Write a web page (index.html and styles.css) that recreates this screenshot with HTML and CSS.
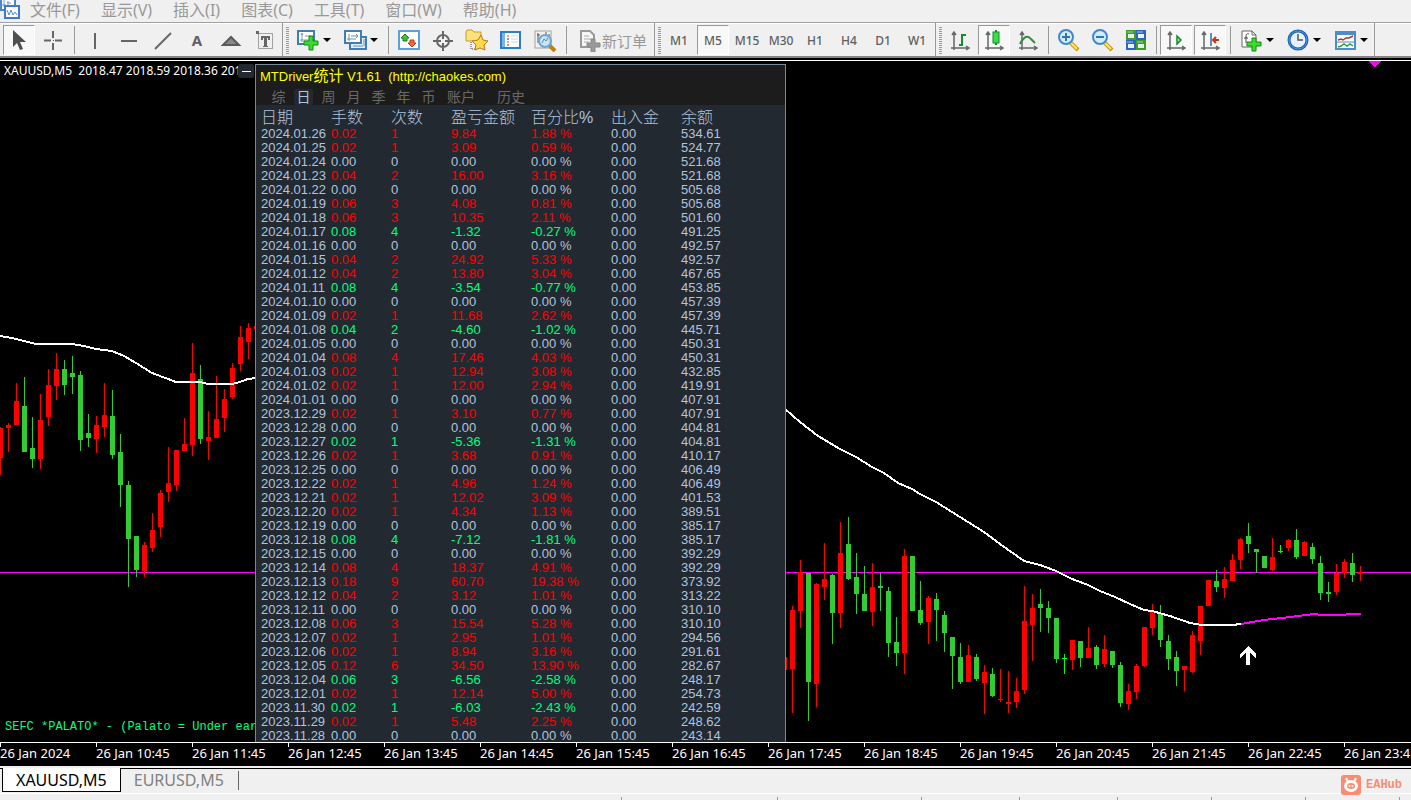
FILE: index.html
```html
<!DOCTYPE html>
<html lang="zh-CN">
<head>
    <meta charset="UTF-8">
    <meta name="viewport" content="width=device-width, initial-scale=1.0">
    <title>XAUUSD,M5</title>
    <link rel="stylesheet" href="styles.css">
</head>
<body>
    <nav class="menu">
        <svg class="menu-icon" width="20" height="20" viewBox="0 0 20 20">
            <path d="M1 0v10h14V0" fill="#fff" stroke="#4a86cc" stroke-width="2"/>
            <path d="M4 0v7M2 5h4M8 1v6M7 3h4" stroke="#6f9bd0" fill="none"/>
            <rect x="5" y="6" width="14" height="12" fill="#fff" stroke="#3c79d0" stroke-width="2"/>
            <path d="M7 10l2 5 2-5 2 5 2-3 2 3" fill="none" stroke="#5e86c4"/>
        </svg>
        <button>文件(F)</button>
        <button>显示(V)</button>
        <button>插入(I)</button>
        <button>图表(C)</button>
        <button>工具(T)</button>
        <button>窗口(W)</button>
        <button>帮助(H)</button>
    </nav>

    <div class="toolbar">
        <!-- Line studies -->
        <div class="group">
            <button class="tool on" aria-label="Cursor"><svg viewBox="0 0 24 24"><path d="M6 2v17l4-4 3 7 3-1-3-7h6z" fill="#4f4f4f"/></svg></button>
            <button class="tool" aria-label="Crosshair"><svg viewBox="0 0 24 24"><path d="M12 3v7M12 15v7M3 12.500h7M14 12.500h7" stroke="#666" stroke-width="2"/><path d="M12 12h1v1h-1z" fill="#555"/></svg></button>
            <span class="sep"></span>
            <button class="tool" aria-label="Vertical line"><svg viewBox="0 0 24 24"><path d="M12 5v16" stroke="#666" stroke-width="2"/></svg></button>
            <button class="tool" aria-label="Horizontal line"><svg viewBox="0 0 24 24"><path d="M4 13h16" stroke="#666" stroke-width="2"/></svg></button>
            <button class="tool" aria-label="Trendline"><svg viewBox="0 0 24 24"><path d="M4 21L20 5" stroke="#666" stroke-width="2"/></svg></button>
            <button class="tool letter">A</button>
            <button class="tool" aria-label="Shapes"><svg viewBox="0 0 24 24"><path d="M4 17l8-8 8 8z" fill="#888" stroke="#5a5a5a" stroke-width="2"/></svg></button>
            <button class="tool" aria-label="Text label"><svg viewBox="0 0 24 24"><path d="M5.500 5.500h14v15h-14z" fill="none" stroke="#555" stroke-dasharray="1 1"/><path d="M3 3h3v3H3zM8 8h9v4h-2v-2h-1v8h1v1h-5v-1h1v-8h-1v2H8z" fill="#666"/></svg></button>
        </div>

        <!-- Standard -->
        <div class="group">
            <span class="grip"></span>
            <button class="tool drop" aria-label="New chart"><svg viewBox="0 0 24 24"><rect x="1" y="3" width="16" height="13" fill="#fff" stroke="#3f7db5" stroke-width="2"/><path d="M5 6v8M3 12h9M4 7l1-2 1 2M8 8h6" stroke="#7799b5" fill="none"/><path d="M12 8h4v5h5v4h-5v5h-4v-5H7v-4h5z" fill="#3bdc2c" stroke="#138b13"/></svg><i class="caret"></i></button>
            <button class="tool drop" aria-label="Profiles"><svg viewBox="0 0 24 24"><rect x="6" y="9" width="16" height="12" fill="#e4effa" stroke="#3f7db5" stroke-width="2"/><rect x="1" y="3" width="16" height="12" fill="#fff" stroke="#3f7db5" stroke-width="2"/><path d="M5 6v7M3 11h9M7 8h7M12 6l2 2-2 2M9 18h10M20 11v7" stroke="#6690b8" fill="none"/></svg><i class="caret"></i></button>
            <span class="sep"></span>
            <button class="tool" aria-label="Market watch"><svg viewBox="0 0 24 24"><rect x="2" y="3" width="20" height="18" fill="#fff" stroke="#5aa0dc" stroke-width="2"/><path d="M8 6l4 4h-2v3H6v-3H4z" fill="#3cc43c" stroke="#187818"/><path d="M15 19l4-4h-2v-3h-4v3h-2z" fill="#f4693a" stroke="#b73a16"/></svg></button>
            <button class="tool" aria-label="Data window"><svg viewBox="0 0 24 24"><circle cx="12" cy="13" r="6" fill="none" stroke="#666" stroke-width="2"/><path d="M12 3v8M12 15v8M2 13h8M14 13h8" stroke="#666" stroke-width="2"/></svg></button>
            <button class="tool" aria-label="Navigator"><svg viewBox="0 0 24 24"><path d="M1 4l1-2h5l2 2h7v9H1z" fill="#fbe27a" stroke="#c79b24"/><path d="M6 14v7h5" stroke="#444" stroke-dasharray="1 1" fill="none"/><path d="M16 7l2 5 5 1-4 4 1 5-5-2-5 2 1-5-4-4 6-1z" fill="#ffd84b" stroke="#b37b16"/></svg></button>
            <button class="tool" aria-label="Terminal"><svg viewBox="0 0 24 24"><rect x="2" y="4" width="19" height="16" fill="#fff" stroke="#2e7cc9" stroke-width="2"/><path d="M3 5h3v14H3z" fill="#79b4e8"/><path d="M8 8h2M8 14h2" stroke="#e33" stroke-width="1"/><path d="M8 11h2M8 17h2" stroke="#333" stroke-width="1"/><path d="M12 8h7M12 11h7M12 14h7" stroke="#c7d6e6"/></svg></button>
            <button class="tool" aria-label="Strategy tester"><svg viewBox="0 0 24 24"><rect x="2" y="3" width="16" height="17" fill="#f4f2ec" stroke="#aaa08e"/><path d="M5 5v10M13 4v8M16 6v9M4 7h3M12 9h3" stroke="#555"/><path d="M16 17l6 6" stroke="#b8860b" stroke-width="4"/><circle cx="12" cy="13" r="6" fill="#c3e2f8" fill-opacity=".9" stroke="#6aa7d6" stroke-width="2"/><path d="M9 15l2-4 2 2 2-3" stroke="#789" fill="none"/></svg></button>
            <span class="sep"></span>
            <button class="tool order"><svg viewBox="0 0 24 24"><path d="M3 3h9l4 4v12H3z" fill="#f6f6f6" stroke="#999" stroke-width="2"/><path d="M6 8h5M6 11h7M6 14h5" stroke="#aaa"/><path d="M13 11h4v4h5v4h-5v5h-4v-5H9v-4h4z" fill="#999" stroke="#888"/></svg>新订单</button>
        </div>

        <!-- Periodicity -->
        <div class="group periods">
            <span class="grip"></span>
            <button class="tool">M1</button>
            <button class="tool on">M5</button>
            <button class="tool">M15</button>
            <button class="tool">M30</button>
            <button class="tool">H1</button>
            <button class="tool">H4</button>
            <button class="tool">D1</button>
            <button class="tool">W1</button>
        </div>

        <!-- Charts -->
        <div class="group charts">
            <span class="grip"></span>
            <button class="tool" aria-label="Bar chart"><svg viewBox="0 0 24 24"><path class="axis" d="M6 5v17M3 20h17M4 7l2-3 2 3M18 18l3 2-3 2"/><path d="M14 6v12M11 17h3M14 7h4" stroke="#168a2c" stroke-width="2" fill="none"/></svg></button>
            <button class="tool on" aria-label="Candlesticks"><svg viewBox="0 0 24 24"><path class="axis" d="M6 5v17M3 20h17M4 7l2-3 2 3M18 18l3 2-3 2"/><path d="M14 2v15" stroke="#168a2c" stroke-width="2"/><rect x="11" y="4" width="6" height="11" fill="#3bdc4b" stroke="#168a2c"/></svg></button>
            <button class="tool" aria-label="Line chart"><svg viewBox="0 0 24 24"><path class="axis" d="M6 5v17M3 20h17M4 7l2-3 2 3M18 18l3 2-3 2"/><path d="M4 16c4-8 8-9 11-5l4 4" stroke="#2f8f3f" stroke-width="2" fill="none"/></svg></button>
            <span class="sep"></span>
            <button class="tool" aria-label="Zoom in"><svg viewBox="0 0 24 24"><path d="M15 15l7 7" stroke="#c49a16" stroke-width="4"/><path d="M15 15l6 6" stroke="#ffe36b" stroke-width="2"/><circle cx="10" cy="9" r="7" fill="#d3ecfb" stroke="#3f88cc" stroke-width="2"/><path d="M6 9h8M10 5v8" stroke="#3178a8" stroke-width="2"/></svg></button>
            <button class="tool" aria-label="Zoom out"><svg viewBox="0 0 24 24"><path d="M15 15l7 7" stroke="#c49a16" stroke-width="4"/><path d="M15 15l6 6" stroke="#ffe36b" stroke-width="2"/><circle cx="10" cy="9" r="7" fill="#d3ecfb" stroke="#3f88cc" stroke-width="2"/><path d="M6 9h8" stroke="#3178a8" stroke-width="2"/></svg></button>
            <button class="tool" aria-label="Tile windows"><svg viewBox="0 0 24 24"><path d="M2 2h10v10H2zM12 12h10v10H12z" fill="#3f9e1c"/><path d="M12 2h10v10H12zM2 12h10v10H2z" fill="#2d63c8"/><path d="M4 6h6v4H4zM14 6h6v4h-6zM4 16h6v4H4zM14 16h6v4h-6z" fill="#e8f2ee"/><path d="M3 4h6M13 4h6M3 14h6M13 14h6" stroke="#a9c7e0"/></svg></button>
            <span class="sep"></span>
            <button class="tool on" aria-label="Auto scroll"><svg viewBox="0 0 24 24"><path class="axis" d="M6 5v17M3 20h17M4 7l2-3 2 3M18 18l3 2-3 2"/><path d="M13 8v8l4-4z" fill="#8cf096" stroke="#168a2c" stroke-width="1.500"/></svg></button>
            <button class="tool on" aria-label="Chart shift"><svg viewBox="0 0 24 24"><path class="axis" d="M6 5v17M3 20h17M4 7l2-3 2 3M18 18l3 2-3 2"/><path d="M13 5v13" stroke="#2d6fa8" stroke-width="1.500"/><path d="M21 12h-5M18 9l-3 3 3 3" stroke="#c03a10" stroke-width="2" fill="none"/></svg></button>
            <span class="sep"></span>
            <button class="tool drop" aria-label="Indicators"><svg viewBox="0 0 24 24"><path d="M2 3h10l4 4v12H2z" fill="#fff" stroke="#666"/><path d="M12 3v4h4" fill="none" stroke="#666"/><path d="M9 6c-2-1-3 0-3 3v6M4 10h4" stroke="#444" fill="none"/><path d="M12 10h4v4h5v4h-5v5h-4v-5H7v-4h5z" fill="#3bdc2c" stroke="#138b13"/></svg><i class="caret"></i></button>
            <button class="tool drop" aria-label="Periods"><svg viewBox="0 0 24 24"><circle cx="11" cy="12" r="9" fill="#e6f1fb" stroke="#1c5fae" stroke-width="3"/><circle cx="11" cy="12" r="9" fill="none" stroke="#4d9ae0"/><path d="M11 6v6h5" stroke="#555" fill="none" stroke-width="1.500"/></svg><i class="caret"></i></button>
            <button class="tool drop" aria-label="Templates"><svg viewBox="0 0 24 24"><rect x="2" y="4" width="19" height="17" fill="#fff" stroke="#4a8dca" stroke-width="2"/><path d="M1 3h21v4H1z" fill="#4a8dca"/><path d="M2 14h19" stroke="#4a8dca"/><path d="M4 12l3-1 2 1 3-2 3 0 4-2" stroke="#b2361b" fill="none" stroke-width="1.500"/><path d="M4 19l3-1 3-2 3 2 3-2 3 2" stroke="#2f9a3f" fill="none" stroke-width="1.500"/></svg><i class="caret"></i></button>
        </div>
    </div>

    <main class="chart">
        <svg class="plot" id="plot"></svg>
        <div class="ohlc">XAUUSD,M5&nbsp; 2018.47 2018.59 2018.36 2018</div>
        <div class="comment">SEFC *PALATO* - (Palato = Under eart</div>
        <button class="minimize" aria-label="Minimize"></button>

        <section class="panel">
            <header>
                <h1>MTDriver<span>统计</span> V1.61&nbsp; (http://chaokes.com)</h1>
                <div class="ranges">
                    <button>综</button>
                    <button class="active">日</button>
                    <button>周</button>
                    <button>月</button>
                    <button>季</button>
                    <button>年</button>
                    <button>币</button>
                    <button class="wide">账户</button>
                    <button class="wide last">历史</button>
                </div>
            </header>
            <table>
                <colgroup>
                    <col class="c-date"><col class="c-lots"><col class="c-lots"><col class="c-profit"><col class="c-profit"><col class="c-flow"><col>
                </colgroup>
                <thead>
                    <tr><th>日期</th><th>手数</th><th>次数</th><th>盈亏金额</th><th>百分比%</th><th>出入金</th><th>余额</th></tr>
                </thead>
                <tbody id="rows"></tbody>
            </table>
        </section>
    </main>

    <ol class="axis-x" id="times"></ol>

    <div class="tabs">
        <button class="tab active">XAUUSD,M5</button>
        <button class="tab">EURUSD,M5</button>
        <div class="brand">
            <svg width="20" height="20" viewBox="0 0 20 20">
                <rect width="20" height="20" rx="3" fill="#fa8c72"/>
                <path d="M5 3l2 4M15 3l-2 4" stroke="#fff" stroke-width="2"/>
                <ellipse cx="10" cy="11" rx="7" ry="6" fill="#fff"/>
                <ellipse cx="10" cy="11" rx="4" ry="3" fill="#fa8c72"/>
                <circle cx="8.500" cy="11" r="1" fill="#fff"/><circle cx="11.500" cy="11" r="1" fill="#fff"/>
            </svg>
            EAHub
        </div>
    </div>

    <footer class="status">
        <span class="fill"></span><span class="server"></span><span class="profile"></span><span class="bar"></span><span class="bar"></span><span></span><span></span><span></span>
    </footer>

    <script src="script.js"></script>
</body>
</html>
```
FILE: styles.css
```css
* { margin: 0; padding: 0; box-sizing: border-box; }
body {
    display: flex;
    flex-direction: column;
    height: 100vh;
    overflow: hidden;
    background: #f0f0f0;
    font-family: "Noto Sans", "Noto Sans CJK SC", sans-serif;
}
button {
    border: none;
    background: none;
    font: inherit;
    color: inherit;
    white-space: nowrap;
}

/* Menu */
.menu {
    display: flex;
    align-items: flex-start;
    gap: 21px;
    height: 22px;
    color: #999;
    font-size: 16px;
    line-height: 20px;
}
.menu-icon { margin-right: -11px; }

/* Toolbar */
.toolbar {
    display: flex;
    height: 36px;
    border-top: 1px solid #a0a0a0;
    border-bottom: 2px solid #858585;
    box-shadow: inset 0 1px #fff;
}
.group {
    display: flex;
    align-items: center;
    gap: 2px;
    padding: 1px 1px 0 3px;
    border-right: 1px solid #999;
}
.tool {
    display: flex;
    align-items: center;
    justify-content: center;
    flex: none;
    width: 32px;
    height: 30px;
    color: #606060;
}
.tool svg { width: 24px; height: 24px; flex: none; }
.tool.on {
    border: 1px solid;
    border-color: #999 #fff #fff #999;
    background: #f8f8f8;
}
.tool.drop { width: 45px; gap: 2px; }
.tool.letter { font: bold 15px "Noto Sans", sans-serif; }
.tool.order {
    width: auto;
    padding: 0 6px 0 7px;
    color: #999;
    font-size: 15px;
}
.caret {
    border: 4px solid transparent;
    border-top-color: #000;
    border-bottom-width: 0;
}
.sep { width: 6px; height: 28px; display: flex; justify-content: center; }
.sep::before { content: ""; width: 1px; background: #999; }
.charts .sep { width: 4px; }
.grip {
    width: 3px;
    height: 27px;
    background: repeating-linear-gradient(#999 0 1px, #f0f0f0 1px 2px);
}
.periods { padding-right: 2px; font-size: 12px; font-weight: 500; }
.axis { fill: none; stroke: #666; stroke-width: 1.5; }

/* Chart */
.chart {
    position: relative;
    flex: 1;
    min-height: 0;
    overflow: hidden;
    background: #000;
    border-top: 2px solid #000;
    box-shadow: inset 0 1px #fff;
    color: #fff;
}
.plot { display: block; width: 100%; height: 100%; shape-rendering: crispEdges; }
.ohlc {
    position: absolute;
    top: 2px;
    left: 4px;
    font-size: 12px;
    line-height: 18px;
}
.comment {
    position: absolute;
    left: 5px;
    bottom: 7px;
    color: #00ff7f;
    font: 12px/16px "Liberation Mono", monospace;
}
.minimize {
    position: absolute;
    top: 4px;
    left: 238px;
    width: 16px;
    height: 14px;
    border-radius: 2px;
    background: #232930;
}
.minimize::before {
    content: "";
    display: block;
    width: 9px;
    margin: 0 auto;
    border-top: 1px solid #fff;
}

/* Statistics window */
.panel {
    position: absolute;
    top: 4px;
    left: 255px;
    width: 531px;
    border: 1px solid #778899;
    border-bottom: none;
    background: #232930;
    font-family: "Liberation Sans", "Noto Sans CJK SC", sans-serif;
    font-size: 13px;
    color: #b0c4de;
}
.panel header { height: 40px; background: #1c1c1c; }
.panel h1 {
    height: 24px;
    padding-left: 4px;
    color: #ff0;
    font-size: 13px;
    font-weight: normal;
    line-height: 22px;
}
.panel h1 span { font-size: 15px; }
.ranges { display: flex; gap: 6px; padding-left: 13px; color: #696969; }
.ranges button { width: 19px; height: 16px; font-size: 14px; line-height: 16px; }
.ranges .active { background: #232930; border-radius: 2px; color: #b0c4de; }
.ranges .wide { width: 34px; }
.ranges .last { margin-left: 10px; }
.panel table { width: 100%; table-layout: fixed; border-collapse: collapse; }
.panel th { height: 22px; padding-top: 4px; font-size: 16px; font-weight: 300; line-height: 18px; }
.panel td { height: 14px; line-height: 14px; }
.panel th, .panel td { text-align: left; white-space: nowrap; }
.panel th:first-child, .panel td:first-child { padding-left: 5px; }
.c-date { width: 75px; }
.c-lots { width: 60px; }
.c-profit { width: 80px; }
.c-flow { width: 70px; }
.win .v { color: #f00; }
.loss .v { color: #00ff7f; }

/* Time axis */
.axis-x {
    display: flex;
    flex: none;
    height: 24px;
    overflow: hidden;
    list-style: none;
    background: #000;
    border-top: 1px solid #fff;
    color: #fff;
    font-size: 13px;
    line-height: 20px;
}
.axis-x li { flex: 0 0 96px; white-space: nowrap; }
.axis-x li::before {
    content: "";
    float: left;
    width: 1px;
    height: 4px;
    margin-right: -1px;
    background: #fff;
}

/* Chart tabs */
.tabs {
    position: relative;
    display: flex;
    flex: none;
    height: 28px;
    padding: 2px 0 0 2px;
    background: linear-gradient(#f0f0f0 2px, #000 2px 3px, #f0f0f0 3px);
    border-bottom: 1px solid #fff;
    font-size: 16px;
}
.tab {
    display: flex;
    align-items: center;
    height: 24px;
    padding: 0 13px;
    color: #808080;
    line-height: 20px;
}
.tab::after { content: ""; width: 1px; height: 19px; margin-left: 14px; margin-right: -14px; background: #666; }
.tab.active { background: #fff; border: 1px solid #000; border-top: none; color: #000; }
.tab.active::after { display: none; }
.brand {
    position: absolute;
    top: 9px;
    right: 9px;
    display: flex;
    align-items: center;
    gap: 5px;
    color: #fa8c72;
    font: bold 12px "Liberation Mono", monospace;
}
.status {
    display: flex;
    flex: none;
    height: 6px;
    padding: 3px 11px 0 0;
}
.status span { width: 94px; border-right: 1px solid #999; }
.status .fill { flex: 1; }
.status .server { width: 156px; }
.status .profile { width: 144px; }
.status .bar { width: 98px; }
```
FILE: script.js
```javascript
// date, lots, trades, profit, percent, balance
const days = [
    ["2024.01.26", "0.02", 1, "9.84", "1.88", "534.61"],
    ["2024.01.25", "0.02", 1, "3.09", "0.59", "524.77"],
    ["2024.01.24", "0.00", 0, "0.00", "0.00", "521.68"],
    ["2024.01.23", "0.04", 2, "16.00", "3.16", "521.68"],
    ["2024.01.22", "0.00", 0, "0.00", "0.00", "505.68"],
    ["2024.01.19", "0.06", 3, "4.08", "0.81", "505.68"],
    ["2024.01.18", "0.06", 3, "10.35", "2.11", "501.60"],
    ["2024.01.17", "0.08", 4, "-1.32", "-0.27", "491.25"],
    ["2024.01.16", "0.00", 0, "0.00", "0.00", "492.57"],
    ["2024.01.15", "0.04", 2, "24.92", "5.33", "492.57"],
    ["2024.01.12", "0.04", 2, "13.80", "3.04", "467.65"],
    ["2024.01.11", "0.08", 4, "-3.54", "-0.77", "453.85"],
    ["2024.01.10", "0.00", 0, "0.00", "0.00", "457.39"],
    ["2024.01.09", "0.02", 1, "11.68", "2.62", "457.39"],
    ["2024.01.08", "0.04", 2, "-4.60", "-1.02", "445.71"],
    ["2024.01.05", "0.00", 0, "0.00", "0.00", "450.31"],
    ["2024.01.04", "0.08", 4, "17.46", "4.03", "450.31"],
    ["2024.01.03", "0.02", 1, "12.94", "3.08", "432.85"],
    ["2024.01.02", "0.02", 1, "12.00", "2.94", "419.91"],
    ["2024.01.01", "0.00", 0, "0.00", "0.00", "407.91"],
    ["2023.12.29", "0.02", 1, "3.10", "0.77", "407.91"],
    ["2023.12.28", "0.00", 0, "0.00", "0.00", "404.81"],
    ["2023.12.27", "0.02", 1, "-5.36", "-1.31", "404.81"],
    ["2023.12.26", "0.02", 1, "3.68", "0.91", "410.17"],
    ["2023.12.25", "0.00", 0, "0.00", "0.00", "406.49"],
    ["2023.12.22", "0.02", 1, "4.96", "1.24", "406.49"],
    ["2023.12.21", "0.02", 1, "12.02", "3.09", "401.53"],
    ["2023.12.20", "0.02", 1, "4.34", "1.13", "389.51"],
    ["2023.12.19", "0.00", 0, "0.00", "0.00", "385.17"],
    ["2023.12.18", "0.08", 4, "-7.12", "-1.81", "385.17"],
    ["2023.12.15", "0.00", 0, "0.00", "0.00", "392.29"],
    ["2023.12.14", "0.08", 4, "18.37", "4.91", "392.29"],
    ["2023.12.13", "0.18", 9, "60.70", "19.38", "373.92"],
    ["2023.12.12", "0.04", 2, "3.12", "1.01", "313.22"],
    ["2023.12.11", "0.00", 0, "0.00", "0.00", "310.10"],
    ["2023.12.08", "0.06", 3, "15.54", "5.28", "310.10"],
    ["2023.12.07", "0.02", 1, "2.95", "1.01", "294.56"],
    ["2023.12.06", "0.02", 1, "8.94", "3.16", "291.61"],
    ["2023.12.05", "0.12", 6, "34.50", "13.90", "282.67"],
    ["2023.12.04", "0.06", 3, "-6.56", "-2.58", "248.17"],
    ["2023.12.01", "0.02", 1, "12.14", "5.00", "254.73"],
    ["2023.11.30", "0.02", 1, "-6.03", "-2.43", "242.59"],
    ["2023.11.29", "0.02", 1, "5.48", "2.25", "248.62"],
    ["2023.11.28", "0.00", 0, "0.00", "0.00", "243.14"]
];

document.getElementById("rows").innerHTML = days.map(([date, lots, count, profit, pct, balance]) => {
    const kind = profit > 0 ? "win" : profit < 0 ? "loss" : "flat";
    return `<tr class="${kind}"><td>${date}</td><td class="v">${lots}</td><td class="v">${count}</td>` +
        `<td class="v">${profit}</td><td class="v">${pct} %</td><td>0.00</td><td>${balance}</td></tr>`;
}).join("");

// Time axis: one label every 12 bars
const times = ["26 Jan 2024"];
for (let h = 10; h < 24; h++) times.push(`26 Jan ${h}:45`);
document.getElementById("times").innerHTML = times.map(t => `<li>${t}</li>`).join("");

// Candles: colour, high, low, body top, body bottom
const left = `r 427 475 428 458;r 423 452 425 428;r 383 425 401 425;g 377 452 406 452;g 417 468 448 459;
r 394 469 420 459;r 369 426 385 417;r 353 400 369 386;g 360 395 369 385;g 356 394 373 377;
g 371 451 375 440;g 414 447 433 438;r 416 453 425 439;r 383 437 415 427;g 390 459 416 455;
g 434 507 452 485;g 481 587 485 539;g 536 577 536 570;r 542 577 545 571;r 513 552 530 548;
r 490 537 493 527;r 447 502 483 492;r 450 491 450 485;r 418 451 444 451;r 343 456 373 445;
g 365 444 379 439;r 411 460 437 441;r 376 438 419 438;r 389 432 399 418;r 363 399 368 397;
r 326 371 337 364;r 323 359 328 342;r 326 329 326 329`;
const right = `r 657 670 657 670;r 606 713 610 669;r 560 628 572 611;g 573 721 573 682;r 583 707 584 684;
r 543 600 579 587;g 574 644 575 613;r 522 628 553 613;g 517 580 544 579;g 553 614 577 594;
g 566 611 594 611;r 563 626 587 612;g 573 611 586 588;g 587 657 591 643;g 617 666 642 653;
r 549 674 556 653;g 556 611 556 611;g 581 625 610 623;r 596 644 598 622;g 593 641 599 610;
g 611 652 615 633;g 637 689 637 656;g 643 684 657 682;r 645 682 655 682;g 654 681 657 679;
r 665 714 672 683;g 668 697 674 696;r 669 702 699 700;r 671 713 702 704;r 678 708 691 702;
r 586 694 621 690;r 594 661 608 625;g 589 632 604 608;g 601 633 608 618;g 618 663 618 659;
l 654 674 658 659;r 640 670 640 660;g 641 667 641 658;r 627 658 648 658;g 645 669 647 665;
r 635 667 649 664;g 651 668 651 665;g 662 707 665 703;r 684 710 691 704;r 664 699 666 692;
r 627 667 627 666;r 604 635 612 628;g 605 647 613 640;g 635 670 641 659;g 651 686 657 671;
r 666 691 666 670;r 631 673 635 672;r 606 655 606 641;r 580 606 580 606;g 570 592 581 587;
r 567 598 579 588;r 554 581 560 581;r 538 569 539 560;g 523 553 536 544;g 549 573 549 552;
g 556 568 556 568;r 538 571 557 570;l 545 553 551 552;r 539 551 540 548;g 529 559 540 557;
r 541 556 542 556;g 543 564 547 559;g 556 600 563 593;g 582 602 592 594;r 564 595 573 592;
r 559 578 562 573;g 553 582 563 575;r 566 581 572 574`;
const colors = { r: "#ff0000", g: "#32cd32", l: "#00ff00" };

function candles(data, first) {
    return data.split(";").map((row, i) => {
        const [c, high, low, top, bottom] = row.trim().split(" ");
        const x = (first + i) * 8;
        return `<rect x="${x}" y="${high}" width="1" height="${low - high}" fill="${colors[c]}"/>` +
            `<rect x="${x - 2}" y="${top}" width="5" height="${bottom - top}" fill="${colors[c]}"/>`;
    }).join("");
}

function line(points, color) {
    return `<polyline points="${points}" fill="none" stroke="${color}" stroke-width="2"/>`;
}

document.getElementById("plot").innerHTML = `<g transform="translate(0,-60)">
    <rect x="0" y="572" width="100%" height="1" fill="#ff00ff"/>
    ${candles(left, 0)}${candles(right, 98)}
    ${line("0,336 12,338 20,340 36,344 72,344 84,346 96,349 112,351 124,356 136,363 152,373 168,379 176,382 200,382 208,384 232,384 240,382 248,379 256,378", "#fff")}
    ${line("785,409 800,422 818,436 840,449 856,457 872,467 884,473 898,483 912,489 920,494 936,502 960,517 984,532 1000,544 1024,561 1040,565 1056,571 1072,579 1088,585 1100,591 1115,597 1130,604 1144,610 1152,611 1170,616 1190,623 1202,625 1232,625 1241,624", "#fff")}
    ${line("1241,624 1264,620 1290,617 1314,614 1322,615 1344,615 1348,614 1361,614", "#ff00ff")}
    <path d="M1368 61h13l-6 7z" fill="#ff00ff"/>
    <path d="M1248 646l8 8v4l-6-5v12h-4v-12l-6 5v-4z" fill="#fff"/>
</g>`;
```
